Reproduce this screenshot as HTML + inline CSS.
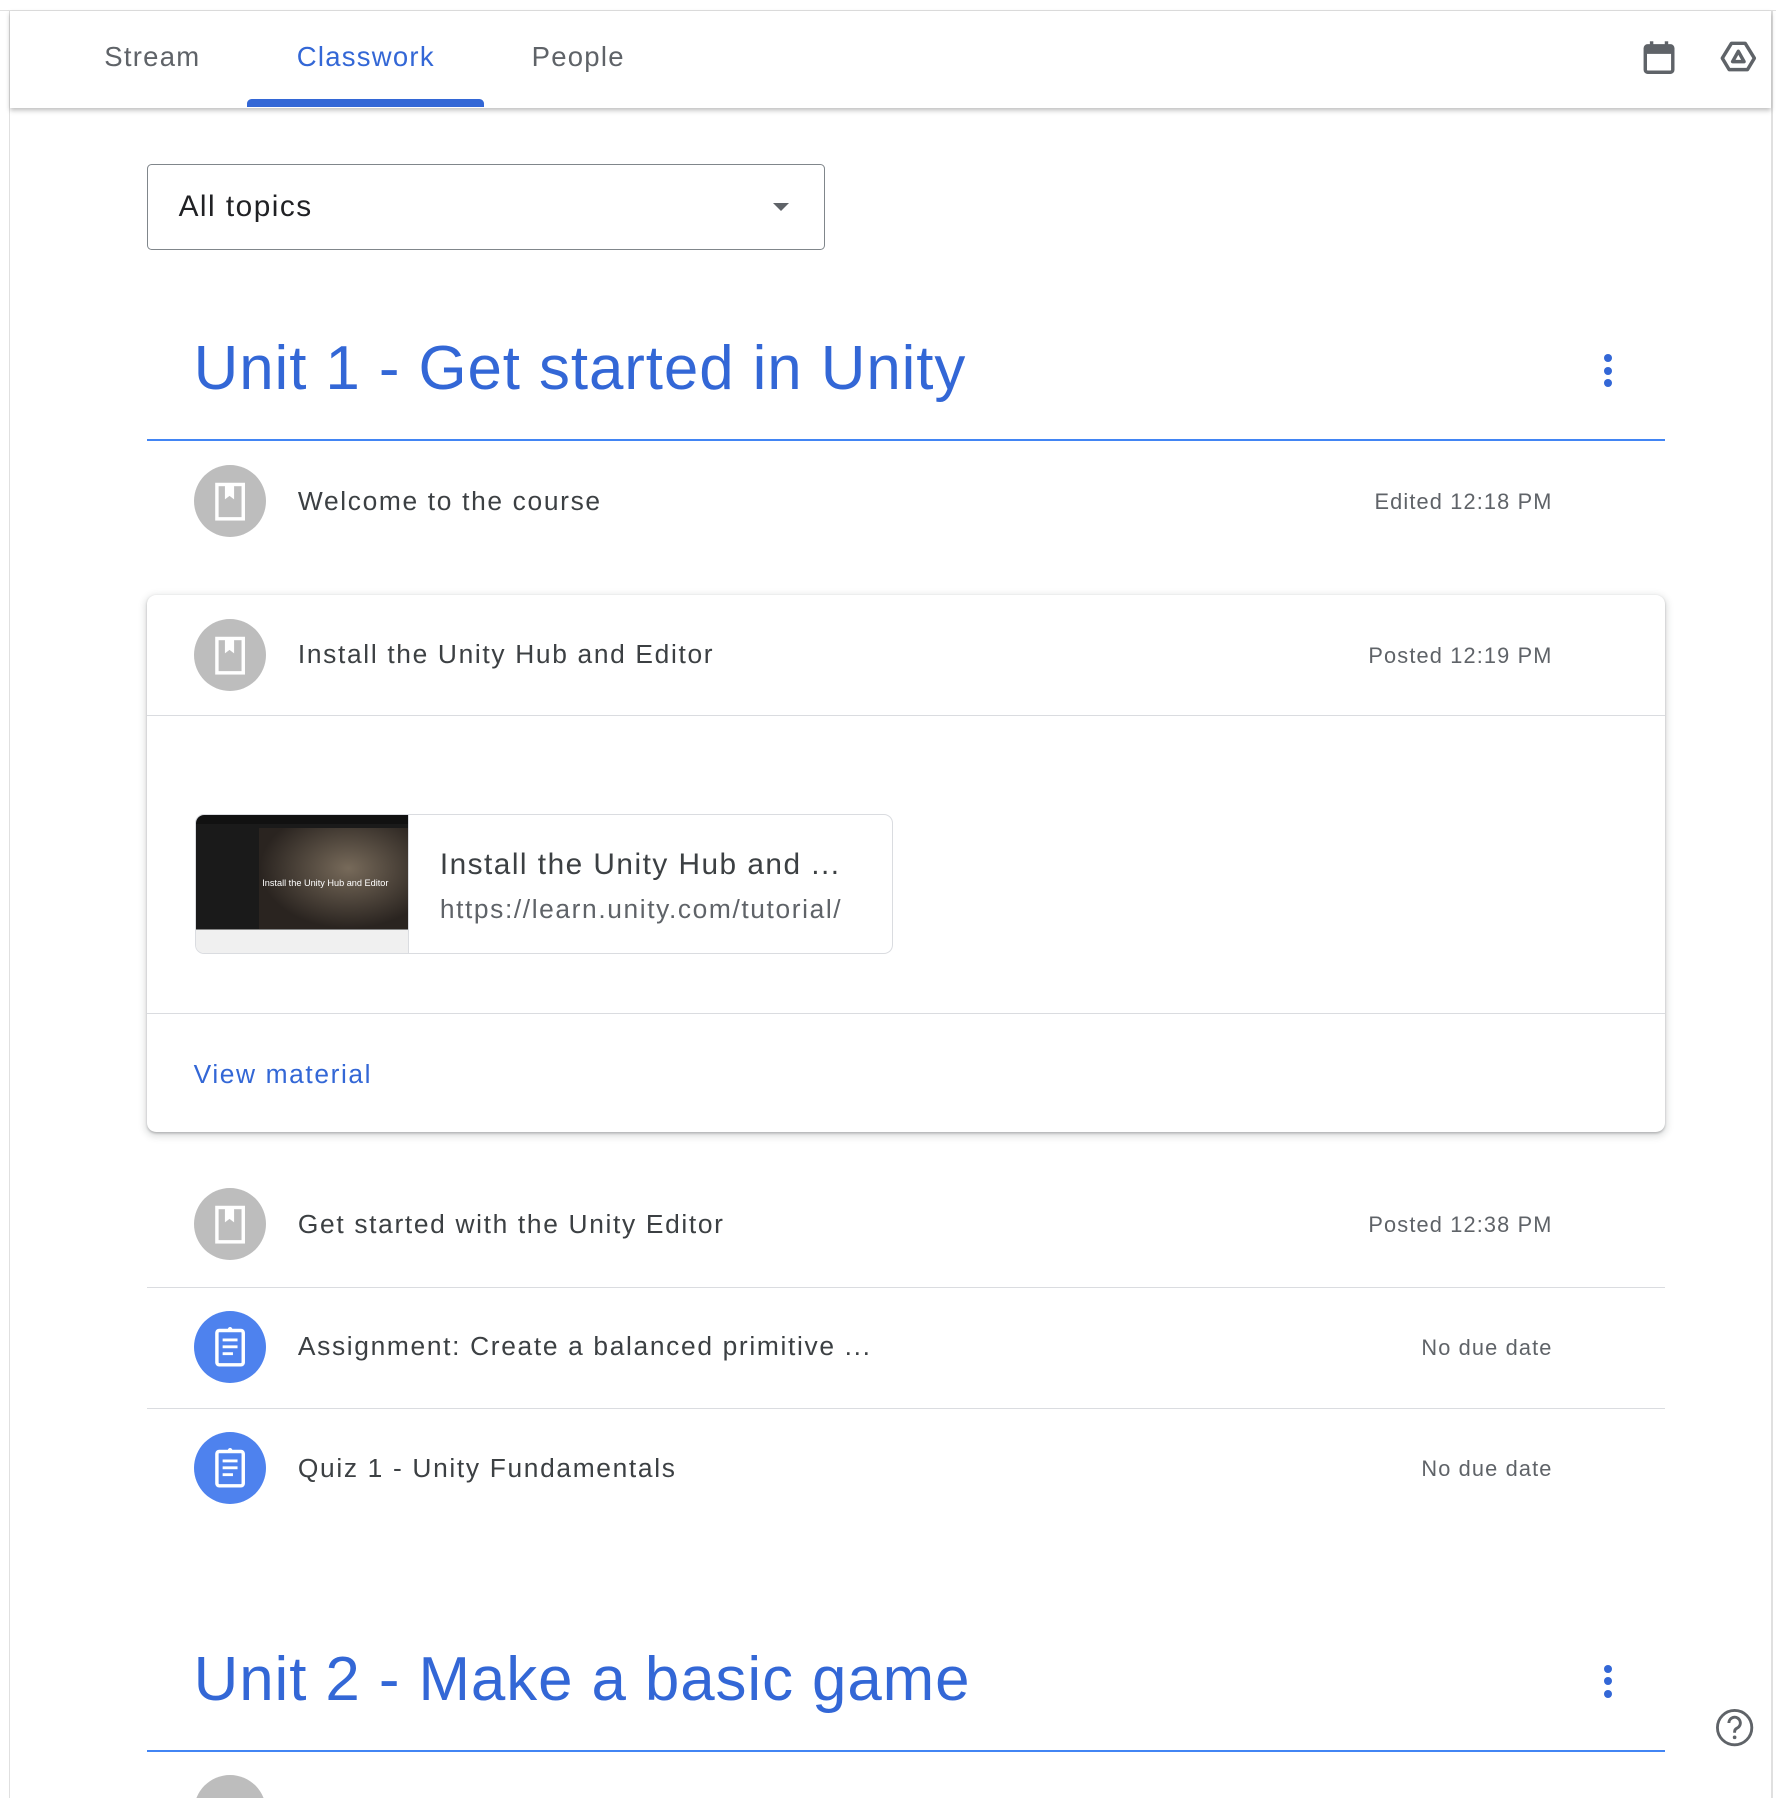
<!DOCTYPE html>
<html><head><meta charset="utf-8"><style>
*{box-sizing:border-box;margin:0;padding:0}
html,body{width:1776px;height:1798px;overflow:hidden;background:#fff;font-family:"Liberation Sans",sans-serif}
#w{zoom:1.14581;width:1550px;height:1570px;position:relative;overflow:hidden}
.a{position:absolute}
.tab{position:absolute;top:26px;font-size:24px;color:#5f6368;line-height:28px;letter-spacing:1.1px}
.row{position:absolute;left:128px;width:1325px;height:106px}
.ic{position:absolute;left:41px;width:63px;height:63px;border-radius:50%;background:#bdbdbd}
.ttl{position:absolute;left:132px;font-size:23px;color:#3c4043;letter-spacing:1.45px}
.rt{position:absolute;right:98px;font-size:19px;color:#5f6368;letter-spacing:1px}
.div{position:absolute;left:128px;width:1325px;height:1px;background:#dadce0}
.unit{position:absolute;left:169px;font-size:54px;color:#3367d6;letter-spacing:0.8px}
.dots{position:absolute;left:1400px;width:8px}
.dots i{display:block;width:7px;height:7px;border-radius:50%;background:#3367d6;margin-bottom:4px}
</style></head><body><div id="w">
<div class="a" style="left:0;top:9px;width:1550px;height:1px;background:#e0e0e0"></div>
<div class="a" style="left:8px;top:9px;width:1px;height:1570px;background:#e0e0e0"></div>
<div class="a" style="left:1546px;top:9px;width:1px;height:1570px;background:#e0e0e0"></div>
<div class="a" style="left:9px;top:10px;width:1537px;height:84px;background:#fff;box-shadow:0 2px 4px rgba(0,0,0,.25);z-index:2">
 <div class="tab" style="left:82px">Stream</div>
 <div class="tab" style="left:250px;color:#3367d6">Classwork</div>
 <div class="tab" style="left:455px">People</div>
 <div class="a" style="left:207px;top:76px;width:206px;height:7px;background:#3367d6;border-radius:4px 4px 0 0"></div>
 <svg class="a" style="left:1425px;top:24px" width="28" height="32" viewBox="0 0 28 32"><rect x="2" y="6" width="24" height="23" rx="2" fill="none" stroke="#5f6368" stroke-width="3"/><rect x="2" y="6" width="24" height="7" fill="#5f6368"/><rect x="6" y="2" width="3" height="6" fill="#5f6368"/><rect x="19" y="2" width="3" height="6" fill="#5f6368"/></svg>
 <svg class="a" style="left:1492px;top:26px" width="32" height="28" viewBox="0 0 32 28"><path d="M10 2h12l8 13-6 10H8L2 15z" fill="none" stroke="#5f6368" stroke-width="3" stroke-linejoin="round"/><path d="M16 9l-5 9h10z" fill="none" stroke="#5f6368" stroke-width="3" stroke-linejoin="round"/></svg>
</div>
<div class="a" style="left:128px;top:143px;width:592px;height:75px;border:1.5px solid #80868b;border-radius:4px">
 <div class="a" style="left:27px;top:22px;font-size:26px;color:#202124;letter-spacing:1.3px">All topics</div>
 <div class="a" style="left:546px;top:33px;width:0;height:0;border-left:7px solid transparent;border-right:7px solid transparent;border-top:7px solid #5f6368"></div>
</div>
<div class="unit" style="top:291px">Unit 1 - Get started in Unity</div>
<div class="dots" style="top:309px"><i></i><i></i><i></i></div>
<div class="a" style="left:128px;top:383px;width:1325px;height:2px;background:#4285f4"></div>

<div class="row" style="top:385px">
 <div class="ic" style="top:21px"><svg width="63" height="63" viewBox="0 0 63 63"><rect x="20" y="17" width="23" height="30" fill="none" stroke="#fff" stroke-width="3"/><path d="M27 18v12l4-3 4 3V18z" fill="#fff"/></svg></div>
 <div class="ttl" style="top:39px">Welcome to the course</div>
 <div class="rt" style="top:42px">Edited 12:18 PM</div>
</div>

<div class="a" style="left:128px;top:519px;width:1325px;height:469px;border-radius:8px;box-shadow:0 1px 2px rgba(60,64,67,.3),0 2px 6px 2px rgba(60,64,67,.15);background:#fff">
 <div class="row" style="left:0;top:0">
  <div class="ic" style="top:21px"><svg width="63" height="63" viewBox="0 0 63 63"><rect x="20" y="17" width="23" height="30" fill="none" stroke="#fff" stroke-width="3"/><path d="M27 18v12l4-3 4 3V18z" fill="#fff"/></svg></div>
  <div class="ttl" style="top:39px">Install the Unity Hub and Editor</div>
  <div class="rt" style="top:42px">Posted 12:19 PM</div>
 </div>
 <div class="a" style="left:0;top:105px;width:1325px;height:1px;background:#dadce0"></div>
 <div class="a" style="left:42px;top:191px;width:609px;height:123px;border:1px solid #dadce0;border-radius:8px;overflow:hidden">
  <div class="a" style="left:0;top:0;width:185px;height:123px;background:linear-gradient(#111 0 8px,#1a1a1a 8px 100px,#f0f0f0 100px)">
   <div class="a" style="left:55px;top:12px;width:130px;height:88px;background:radial-gradient(ellipse at 60% 40%,#776a5a,#2a2420 70%)"></div>
   <div class="a" style="left:58px;top:55px;font-size:8px;color:#fff">Install the Unity Hub and Editor</div>
  </div>
  <div class="a" style="left:185px;top:0;width:1px;height:123px;background:#dadce0"></div>
  <div class="a" style="left:213px;top:29px;font-size:26px;color:#3c4043;letter-spacing:1.3px">Install the Unity Hub and ...</div>
  <div class="a" style="left:213px;top:69px;font-size:23px;color:#5f6368;letter-spacing:1.4px">https://learn.unity.com/tutorial/</div>
 </div>
 <div class="a" style="left:0;top:365px;width:1325px;height:1px;background:#dadce0"></div>
 <div class="a" style="left:41px;top:405px;font-size:23px;color:#3367d6;letter-spacing:1.4px">View material</div>
</div>

<div class="row" style="top:1016px">
 <div class="ic" style="top:21px"><svg width="63" height="63" viewBox="0 0 63 63"><rect x="20" y="17" width="23" height="30" fill="none" stroke="#fff" stroke-width="3"/><path d="M27 18v12l4-3 4 3V18z" fill="#fff"/></svg></div>
 <div class="ttl" style="top:39px">Get started with the Unity Editor</div>
 <div class="rt" style="top:42px">Posted 12:38 PM</div>
</div>
<div class="div" style="top:1123px"></div>
<div class="row" style="top:1123px">
 <div class="ic" style="top:21px;background:#4e82ee"><svg width="63" height="63" viewBox="0 0 63 63"><rect x="20" y="17" width="23" height="30" rx="2" fill="none" stroke="#fff" stroke-width="3"/><circle cx="31.5" cy="16" r="2" fill="#fff"/><rect x="25" y="24" width="13" height="2.5" fill="#fff"/><rect x="25" y="30" width="13" height="2.5" fill="#fff"/><rect x="25" y="36" width="9" height="2.5" fill="#fff"/></svg></div>
 <div class="ttl" style="top:39px">Assignment: Create a balanced primitive ...</div>
 <div class="rt" style="top:42px">No due date</div>
</div>
<div class="div" style="top:1229px"></div>
<div class="row" style="top:1229px">
 <div class="ic" style="top:21px;background:#4e82ee"><svg width="63" height="63" viewBox="0 0 63 63"><rect x="20" y="17" width="23" height="30" rx="2" fill="none" stroke="#fff" stroke-width="3"/><circle cx="31.5" cy="16" r="2" fill="#fff"/><rect x="25" y="24" width="13" height="2.5" fill="#fff"/><rect x="25" y="30" width="13" height="2.5" fill="#fff"/><rect x="25" y="36" width="9" height="2.5" fill="#fff"/></svg></div>
 <div class="ttl" style="top:39px">Quiz 1 - Unity Fundamentals</div>
 <div class="rt" style="top:42px">No due date</div>
</div>

<div class="unit" style="top:1435px">Unit 2 - Make a basic game</div>
<div class="dots" style="top:1453px"><i></i><i></i><i></i></div>
<div class="a" style="left:128px;top:1527px;width:1325px;height:2px;background:#4285f4"></div>
<div class="a" style="left:169px;top:1549px;width:63px;height:63px;border-radius:50%;background:#bdbdbd"></div>
<svg class="a" style="left:1496px;top:1490px" width="36" height="36" viewBox="0 0 36 36"><circle cx="18" cy="18" r="15" fill="none" stroke="#5f6368" stroke-width="2.5"/><path d="M13 14a5 5 0 1 1 7 4.5c-1.5.8-2 1.5-2 3v1" fill="none" stroke="#5f6368" stroke-width="2.5"/><circle cx="18" cy="26.5" r="1.6" fill="#5f6368"/></svg>
</div></body></html>
